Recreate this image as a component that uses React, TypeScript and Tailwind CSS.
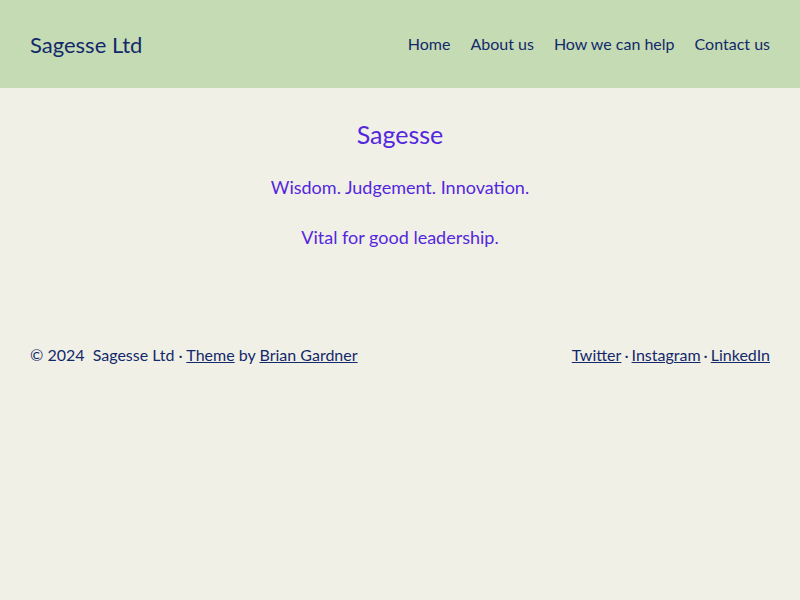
export default function App() {
  return (
    <div className="min-h-screen bg-[#f1f0e6] text-[#13296b]" style={{ fontFamily: "Lato, 'Noto Sans', sans-serif" }}>
      <header className="h-[88px] bg-[#c5dbb3] px-[30px] flex items-center justify-between">
        <a href="#" className="text-[22px]">Sagesse Ltd</a>
        <nav className="flex items-center gap-5 text-[16px]">
          <a href="#">Home</a>
          <a href="#">About us</a>
          <a href="#">How we can help</a>
          <a href="#">Contact us</a>
        </nav>
      </header>

      <main className="text-center text-[#5427df] pt-[29px]">
        <h1 className="text-[25px] leading-[34px]">Sagesse</h1>
        <p className="text-[18px] mt-[23px]">Wisdom. Judgement. Innovation.</p>
        <p className="text-[18px] mt-[23px]">Vital for good leadership.</p>
      </main>

      <footer className="mt-[92px] px-[30px] flex items-center justify-between text-[16px]">
        <p>
          © 2024&nbsp; Sagesse Ltd · <a href="#" className="underline">Theme</a> by{" "}
          <a href="#" className="underline">Brian Gardner</a>
        </p>
        <p className="flex gap-[3px]">
          <a href="#" className="underline">Twitter</a>
          <span>·</span>
          <a href="#" className="underline">Instagram</a>
          <span>·</span>
          <a href="#" className="underline">LinkedIn</a>
        </p>
      </footer>
    </div>
  );
}
